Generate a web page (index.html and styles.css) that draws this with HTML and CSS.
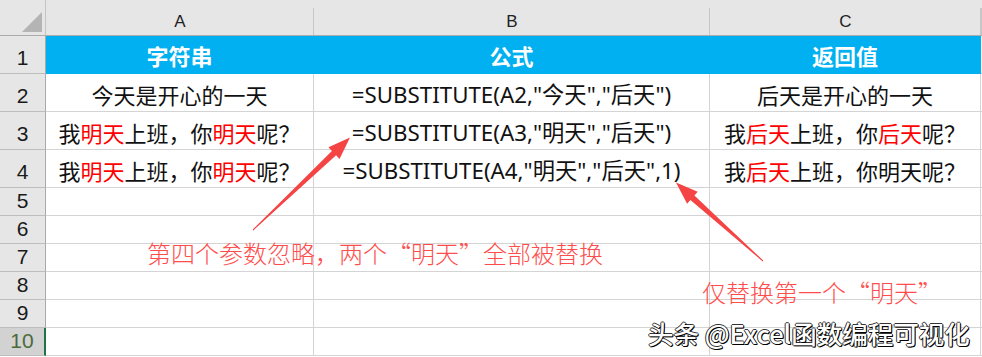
FILE: index.html
```html
<!DOCTYPE html>
<html lang="zh">
<head>
<meta charset="utf-8">
<link rel="stylesheet" href="styles.css">
</head>
<body>
<div class="sheet">
  <div class="grid">
    <div class="corner"><svg class="tri" width="46" height="36" viewBox="0 0 46 36"><polygon points="22,32 42,12 42,32" fill="#b4b4b4"/></svg></div>
    <div class="colhead">A</div>
    <div class="colhead">B</div>
    <div class="colhead">C</div>
    <div class="colhead filler"></div>

    <div class="rowhead tall">1</div>
    <div class="cell title">字符串</div>
    <div class="cell title">公式</div>
    <div class="cell title">返回值</div>
    <div class="cell filler"></div>

    <div class="rowhead tall">2</div>
    <div class="cell">今天是开心的一天</div>
    <div class="cell formula">=SUBSTITUTE(A2,"今天","后天")</div>
    <div class="cell">后天是开心的一天</div>
    <div class="cell filler"></div>

    <div class="rowhead tall">3</div>
    <div class="cell">我<span class="red">明天</span>上班，你<span class="red">明天</span>呢？</div>
    <div class="cell formula">=SUBSTITUTE(A3,"明天","后天")</div>
    <div class="cell">我<span class="red">后天</span>上班，你<span class="red">后天</span>呢？</div>
    <div class="cell filler"></div>

    <div class="rowhead tall">4</div>
    <div class="cell">我<span class="red">明天</span>上班，你<span class="red">明天</span>呢？</div>
    <div class="cell formula">=SUBSTITUTE(A4,"明天","后天",1)</div>
    <div class="cell">我<span class="red">后天</span>上班，你明天呢？</div>
    <div class="cell filler"></div>

    <div class="rowhead">5</div>
    <div class="cell"></div><div class="cell"></div><div class="cell"></div><div class="cell filler"></div>
    <div class="rowhead">6</div>
    <div class="cell"></div><div class="cell"></div><div class="cell"></div><div class="cell filler"></div>
    <div class="rowhead">7</div>
    <div class="cell"></div><div class="cell"></div><div class="cell"></div><div class="cell filler"></div>
    <div class="rowhead">8</div>
    <div class="cell"></div><div class="cell"></div><div class="cell"></div><div class="cell filler"></div>
    <div class="rowhead">9</div>
    <div class="cell"></div><div class="cell"></div><div class="cell"></div><div class="cell filler"></div>
    <div class="rowhead active">10</div>
    <div class="cell"></div><div class="cell"></div><div class="cell"></div><div class="cell filler"></div>
  </div>

  <svg class="arrows" width="982" height="357" viewBox="0 0 982 357">
    <polygon fill="#f54444" points="252.7,229.6 331.9,150.9 328.5,147.3 350,137.5 339.5,158.9 336.1,155.3 253.3,230.4"/>
    <polygon fill="#f54444" points="763.3,260.6 694.4,195.5 697.7,191.7 676,182.5 687.1,203.7 690.4,199.9 762.7,261.4"/>
  </svg>

  <div class="note note1">第四个参数忽略，两个“明天”全部被替换</div>
  <div class="note note2">仅替换第一个“明天”</div>
  <div class="watermark">头条 @Excel函数编程可视化</div>
</div>
</body>
</html>
```
FILE: styles.css
```css
html, body {
  margin: 0;
  padding: 0;
  background: #ffffff;
}

.sheet {
  position: relative;
  width: 982px;
  height: 357px;
  overflow: hidden;
  font-family: "Noto Sans", "Noto Sans CJK SC", sans-serif;
}

.grid {
  display: grid;
  grid-template-columns: 46px 268px 396px 271px 1px;
  grid-template-rows: 36px 38px 38px 38px 38px repeat(6, 28px);
}

.corner {
  background: #e6e6e6;
  border-right: 1px solid #c4c4c4;
  border-bottom: 1px solid #ababab;
}

.tri {
  display: block;
}

.colhead {
  box-sizing: border-box;
  border-bottom: 1px solid #ababab;
  background-image: linear-gradient(#c6c6c6, #c6c6c6);
  background-size: 1px 27px;
  background-position: right bottom;
  background-repeat: no-repeat;
  background-color: #e6e6e6;
  display: flex;
  align-items: flex-end;
  justify-content: center;
  padding-bottom: 3px;
  font-family: "Liberation Sans", sans-serif;
  font-size: 17px;
  color: #222222;
}

.rowhead {
  box-sizing: border-box;
  background: #e6e6e6;
  border-right: 1px solid #a9a9a9;
  border-bottom: 1px solid #bdbdbd;
  display: flex;
  align-items: flex-end;
  justify-content: center;
  padding-bottom: 4px;
  font-family: "Liberation Sans", sans-serif;
  font-size: 21px;
  line-height: 21px;
  color: #1a1a1a;
}

.rowhead.tall {
  padding-bottom: 5px;
}

.rowhead.active {
  background: #d2d2d2;
  color: #4a6a3a;
  border-right: 2px solid #217346;
}

.cell {
  box-sizing: border-box;
  border-right: 1px solid #d4d4d4;
  border-bottom: 1px solid #d4d4d4;
  display: flex;
  align-items: center;
  justify-content: center;
  padding-top: 5px;
  font-size: 22px;
  line-height: 26px;
  color: #111111;
  white-space: nowrap;
}

.cell.filler {
  border-right: none;
}

.cell.title {
  background: #00b0f0;
  border-color: #00b0f0;
  color: #ffffff;
  font-family: "Noto Sans CJK SC", sans-serif;
  font-weight: 700;
  padding-top: 0;
}

.cell.formula {
  font-family: "Noto Sans", "Noto Sans CJK SC", sans-serif;
  font-size: 22.3px;
}

.red {
  color: #ff0000;
}

.arrows {
  position: absolute;
  left: 0;
  top: 0;
}

.note {
  position: absolute;
  font-family: "Noto Sans CJK SC", sans-serif;
  font-weight: 300;
  font-size: 24px;
  line-height: 24px;
  color: #ff4d4d;
  white-space: nowrap;
}

.note1 {
  left: 147px;
  top: 241px;
}

.note2 {
  left: 702px;
  top: 280px;
}

.watermark {
  position: absolute;
  left: 648px;
  top: 319px;
  font-family: "Noto Sans CJK SC", sans-serif;
  font-weight: 500;
  font-size: 25.5px;
  line-height: 28px;
  color: #ffffff;
  white-space: nowrap;
  text-shadow: 1px 1px 0 #000, -1px 0 0 #333, 0 -1px 0 #333, 1px 0 0 #333, 0 1px 0 #333;
}
```
